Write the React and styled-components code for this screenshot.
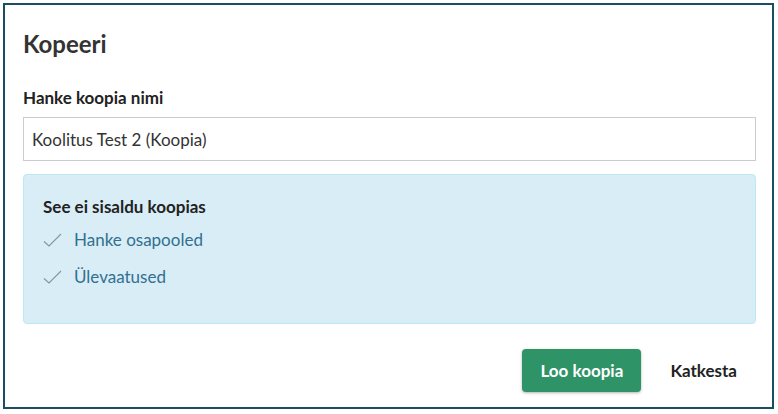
import React from "react";
import styled, { createGlobalStyle } from "styled-components";

const Global = createGlobalStyle`
  html, body { margin: 0; padding: 0; background: #fff; }
  body { font-family: Lato, "Open Sans", sans-serif; }
  * { box-sizing: border-box; }
`;

const Page = styled.div`
  padding: 3px 4px 5px 3px;
  width: 778px;
  height: 414px;
`;

const Dialog = styled.div`
  width: 771px;
  height: 406px;
  border: 2px solid #1b4e63;
  background: #fff;
  display: flex;
  flex-direction: column;
  padding: 0 16px 0 18px;
`;

const Title = styled.h1`
  margin: 0;
  padding-top: 24px;
  height: 72px;
  font-size: 24px;
  font-weight: 700;
  color: #333;
  line-height: 30px;
`;

const Label = styled.label`
  display: block;
  font-size: 17px;
  font-weight: 700;
  color: #222;
  line-height: 22px;
  height: 40px;
  padding-top: 10px;
`;

const Input = styled.input`
  width: 733px;
  height: 44px;
  border: 1px solid #cccccc;
  border-radius: 0;
  padding: 0 8px;
  font-family: inherit;
  font-size: 17px;
  color: #333;
  outline: none;
  margin-bottom: 13px;
`;

const Info = styled.div`
  width: 733px;
  height: 150px;
  background: #d9edf7;
  border: 1px solid #bce8f1;
  border-radius: 4px;
  padding: 20px 19px;
`;

const InfoTitle = styled.div`
  font-size: 17px;
  font-weight: 700;
  color: #222;
  line-height: 24px;
  margin-bottom: 9px;
`;

const List = styled.ul`
  list-style: none;
  margin: 0;
  padding: 0;
  display: flex;
  flex-direction: column;
  gap: 13px;
`;

const Item = styled.li`
  display: flex;
  align-items: center;
  gap: 12px;
  font-size: 17px;
  color: #31708f;
  line-height: 24px;
`;

const Check = () => (
  <svg width="19" height="14" viewBox="0 0 19 14" fill="none">
    <path d="M1 8.5 L6 13 L18 1" stroke="#7b97a5" strokeWidth="1.1" />
  </svg>
);

const Footer = styled.div`
  display: flex;
  justify-content: flex-end;
  align-items: center;
  gap: 17px;
  margin-top: 25px;
  padding-right: 7px;
`;

const Button = styled.button`
  height: 43px;
  padding: 0 ${p => (p.$primary ? "17px" : "12px")};
  font-family: inherit;
  font-size: 17px;
  font-weight: 700;
  border: none;
  border-radius: 4px;
  cursor: pointer;
  background: ${p => (p.$primary ? "#2e9366" : "transparent")};
  color: ${p => (p.$primary ? "#fff" : "#222")};
  box-shadow: ${p => (p.$primary ? "0 1px 3px rgba(0,0,0,0.3)" : "none")};
  min-width: ${p => (p.$primary ? "119px" : "auto")};
`;

export default function App() {
  return (
    <Page>
      <Global />
      <Dialog>
        <Title>Kopeeri</Title>
        <Label htmlFor="name">Hanke koopia nimi</Label>
        <Input id="name" defaultValue="Koolitus Test 2 (Koopia)" />
        <Info>
          <InfoTitle>See ei sisaldu koopias</InfoTitle>
          <List>
            <Item><Check />Hanke osapooled</Item>
            <Item><Check />Ülevaatused</Item>
          </List>
        </Info>
        <Footer>
          <Button $primary>Loo koopia</Button>
          <Button>Katkesta</Button>
        </Footer>
      </Dialog>
    </Page>
  );
}
